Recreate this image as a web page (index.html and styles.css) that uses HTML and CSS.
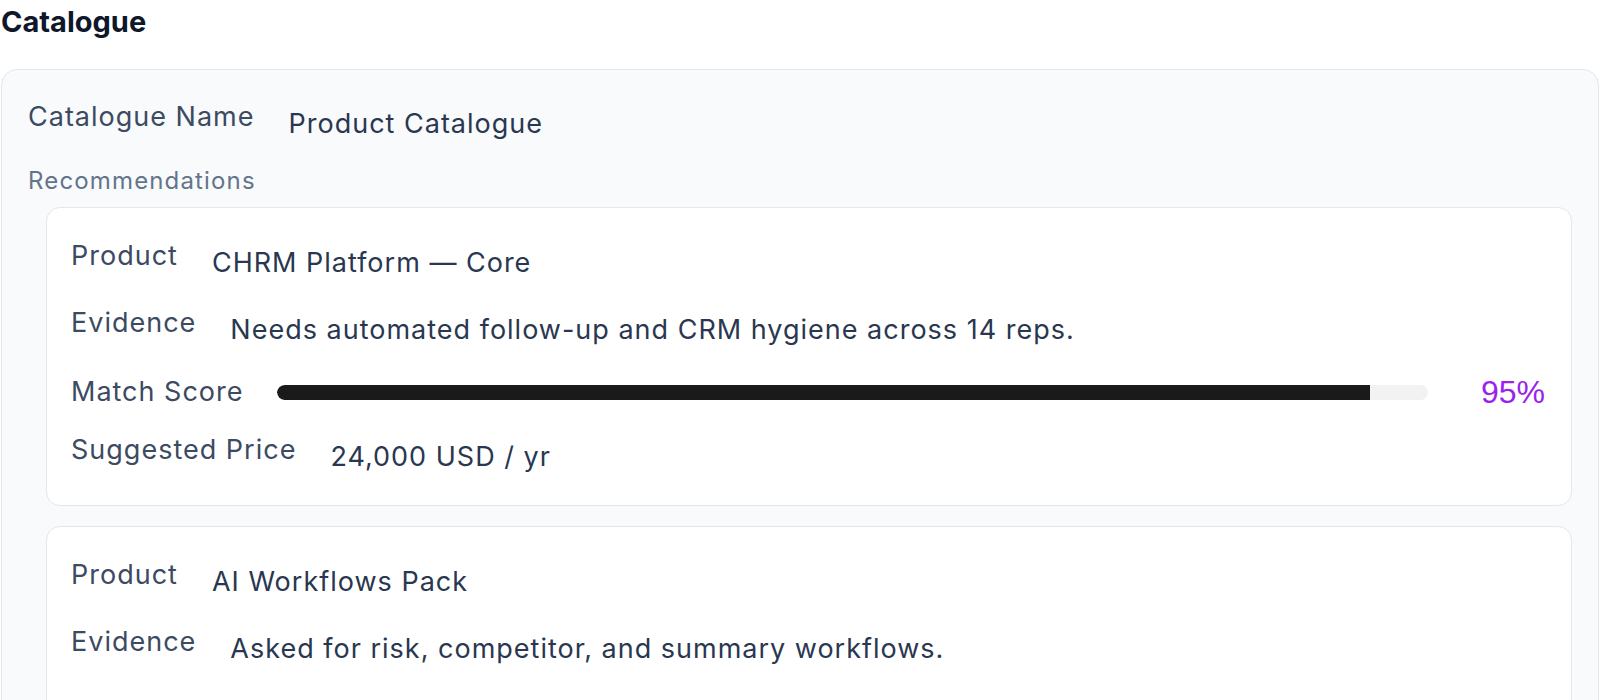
FILE: index.html
```html
<!DOCTYPE html>
<html lang="en">
<head>
<meta charset="utf-8">
<title>Catalogue</title>
<link rel="stylesheet" href="styles.css">
</head>
<body>
<main class="page">
  <h2 class="title">Catalogue</h2>
  <section class="catalogue">
    <div class="field">
      <span class="label">Catalogue Name</span>
      <span class="value">Product Catalogue</span>
    </div>
    <div class="section-label">Recommendations</div>
    <div class="recs">
      <article class="rec">
        <div class="field">
          <span class="label">Product</span>
          <span class="value">CHRM Platform — Core</span>
        </div>
        <div class="field">
          <span class="label">Evidence</span>
          <span class="value">Needs automated follow-up and CRM hygiene across 14 reps.</span>
        </div>
        <div class="field field-score">
          <span class="label">Match Score</span>
          <div class="bar"><div class="bar-fill" style="width:95%"></div></div>
          <span class="score">95%</span>
        </div>
        <div class="field">
          <span class="label">Suggested Price</span>
          <span class="value">24,000 USD / yr</span>
        </div>
      </article>
      <article class="rec">
        <div class="field">
          <span class="label">Product</span>
          <span class="value">AI Workflows Pack</span>
        </div>
        <div class="field">
          <span class="label">Evidence</span>
          <span class="value">Asked for risk, competitor, and summary workflows.</span>
        </div>
        <div class="field field-score">
          <span class="label">Match Score</span>
          <div class="bar"><div class="bar-fill" style="width:88%"></div></div>
          <span class="score">88%</span>
        </div>
        <div class="field">
          <span class="label">Suggested Price</span>
          <span class="value">9,600 USD / yr</span>
        </div>
      </article>
    </div>
  </section>
</main>
</body>
</html>
```

FILE: styles.css
```css
html, body {
  margin: 0;
  padding: 0;
  background: #ffffff;
}

body {
  font-family: Inter, "Noto Sans", "Liberation Sans", sans-serif;
  color: #2a3750;
}

.page {
  padding: 0 1px;
}

.title {
  margin: 0 0 25px 0;
  font-size: 29px;
  line-height: 44px;
  font-weight: 700;
  color: #0f172a;
}

.catalogue {
  border: 1px solid #e2e8f0;
  border-radius: 16px;
  background: #f8fafc;
  padding: 27px 26px 28px 26px;
}

.field {
  display: flex;
  align-items: flex-start;
  gap: 34px;
}

.label {
  font-size: 27px;
  line-height: 40px;
  letter-spacing: 1px;
  color: #3c4a62;
  white-space: nowrap;
}

.value {
  font-size: 27px;
  line-height: 40px;
  letter-spacing: 1px;
  margin-top: 7px;
  color: #2a3750;
}

.section-label {
  margin-top: 20px;
  font-size: 24px;
  line-height: 33px;
  letter-spacing: 1.15px;
  color: #64748b;
}

.recs {
  margin-top: 10px;
  padding-left: 18px;
  display: flex;
  flex-direction: column;
  gap: 20px;
}

.rec {
  background: #ffffff;
  border: 1px solid #e2e8f0;
  border-radius: 14px;
  padding: 28px 24px 28px 24px;
  display: flex;
  flex-direction: column;
  gap: 20px;
}

.field-score {
  align-items: center;
  gap: 33px;
  margin-top: 2px;
  margin-bottom: -2px;
}

.bar {
  flex: 1;
  height: 15px;
  border-radius: 8px;
  background: #f2f2f2;
  overflow: hidden;
}

.bar-fill {
  height: 100%;
  background: #1a1a1a;
  border-radius: 8px 0 0 8px;
}

.score {
  flex: 0 0 86px;
  text-align: right;
  padding-right: 2px;
  box-sizing: border-box;
  font-family: "Liberation Sans", Arial, sans-serif;
  font-size: 32px;
  line-height: 40px;
  color: #9a22ee;
}
```
